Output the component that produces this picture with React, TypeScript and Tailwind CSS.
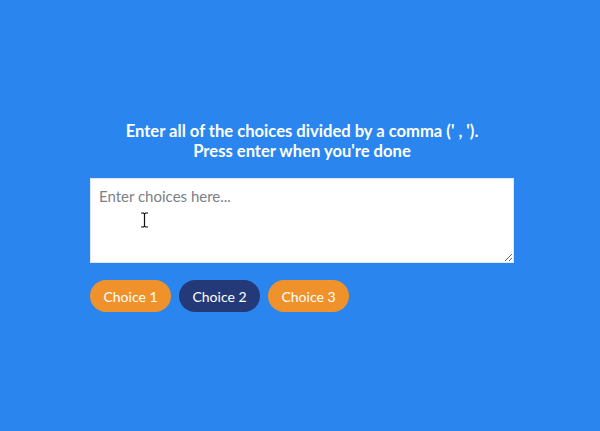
import React from "react";

const choices = [
  { label: "Choice 1", active: false },
  { label: "Choice 2", active: true },
  { label: "Choice 3", active: false },
];

const App: React.FC = () => {
  return (
    <div
      className="flex justify-center w-full h-[431px] pl-1 bg-[#2a86ee] overflow-hidden"
      style={{ fontFamily: "Lato, 'Open Sans', sans-serif" }}
    >
      <div className="flex flex-col w-[424px] pt-[121px]">
        <h1 className="text-center text-white font-bold text-[16.6px] leading-[20px]">
          Enter all of the choices divided by a comma (' , ').
          <br />
          Press enter when you're done
        </h1>
        <div className="relative mt-[17px]">
          <textarea
            placeholder="Enter choices here..."
            className="block w-full h-[85px] px-2 pt-[6px] pb-2 text-[15px] text-gray-700 bg-white border border-[#dfe7f1] outline-none placeholder:text-[#7b7f86]"
          />
          <svg
            className="absolute left-[50px] top-[34px] pointer-events-none"
            width="9"
            height="16"
            viewBox="0 0 9 16"
          >
            <path
              d="M1 1h2.5l1 1 1-1H8M4.5 2v12M1 15h2.5l1-1 1 1H8"
              fill="none"
              stroke="#111"
              strokeWidth="1.2"
            />
          </svg>
        </div>
        <div className="flex gap-2 mt-[17px]">
          {choices.map((c) => (
            <button
              key={c.label}
              className={`w-[81px] h-[32px] rounded-full text-white text-[14px] ${
                c.active ? "bg-[#243a78]" : "bg-[#f0922b]"
              }`}
            >
              {c.label}
            </button>
          ))}
        </div>
      </div>
    </div>
  );
};

export default App;
